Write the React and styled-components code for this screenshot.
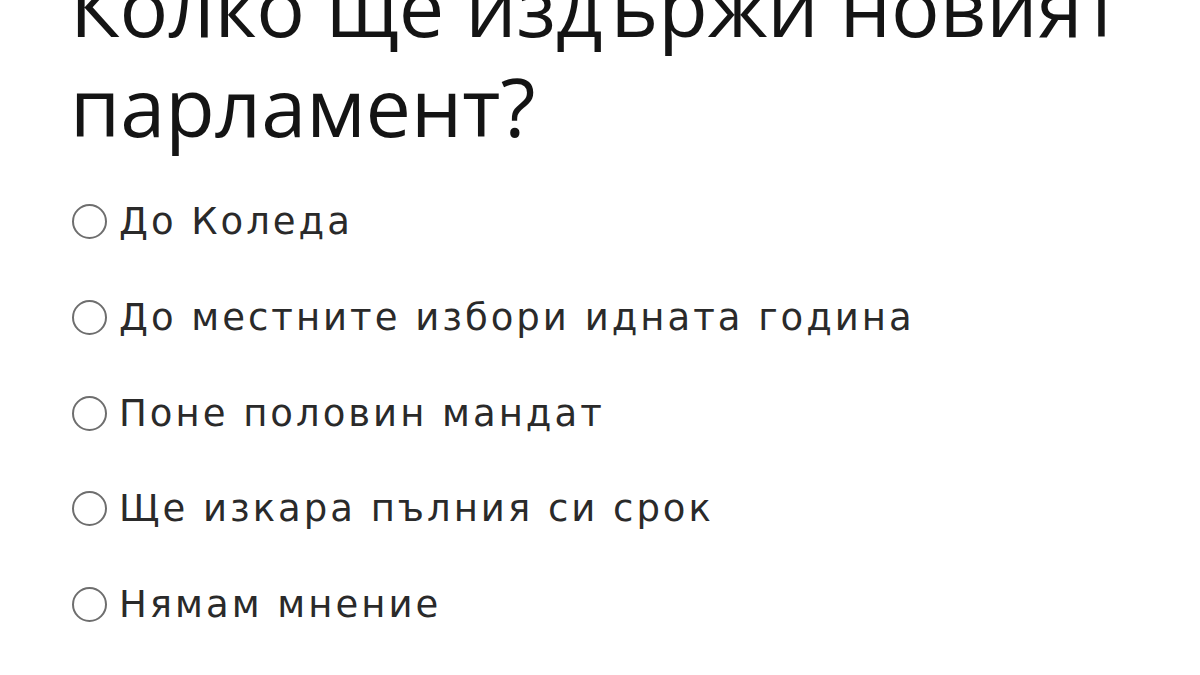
import styled, { createGlobalStyle } from "styled-components";

const GlobalStyle = createGlobalStyle`
  html, body {
    margin: 0;
    padding: 0;
    background: #ffffff;
    overflow: hidden;
  }
`;

const Page = styled.div`
  width: 1200px;
  height: 675px;
  overflow: hidden;
  padding: 0 20px 0 72px;
  box-sizing: border-box;
`;

const Title = styled.h1`
  margin: -44px 0 0 -2px;
  font-family: "Open Sans", "Noto Sans", sans-serif;
  font-weight: 400;
  font-size: 81px;
  line-height: 100px;
  color: #141414;
`;

const Options = styled.form`
  display: flex;
  flex-direction: column;
  margin-top: 18px;
`;

const Option = styled.label`
  display: flex;
  align-items: center;
  gap: 12px;
  height: 95.7px;
  font-family: "DejaVu Sans", "Open Sans", sans-serif;
  font-size: 37px;
  letter-spacing: 3px;
  color: #2a2a2a;
  cursor: pointer;
`;

const Radio = styled.span`
  width: 31px;
  height: 31px;
  border: 2px solid #6e6e6e;
  border-radius: 50%;
  flex-shrink: 0;
`;

const answers = [
  "До Коледа",
  "До местните избори идната година",
  "Поне половин мандат",
  "Ще изкара пълния си срок",
  "Нямам мнение",
];

const App = () => {
  return (
    <Page>
      <GlobalStyle />
      <Title>Колко ще издържи новият парламент?</Title>
      <Options>
        {answers.map((a) => (
          <Option key={a}>
            <Radio />
            {a}
          </Option>
        ))}
      </Options>
    </Page>
  );
};

export default App;
